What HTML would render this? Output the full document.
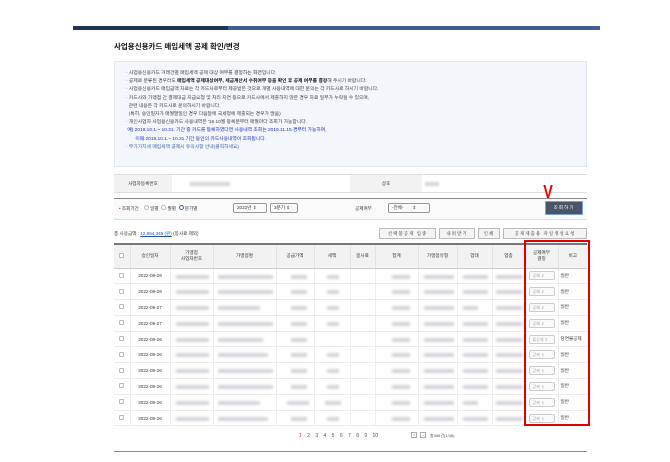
<!DOCTYPE html>
<html><head><meta charset="utf-8"><style>
*{margin:0;padding:0;box-sizing:border-box}
body{width:670px;height:462px;background:#fff;font-family:"Liberation Sans","Noto Sans CJK KR",sans-serif;color:#333;position:relative;overflow:hidden;font-size:5px}
.a{position:absolute}
.bar{left:73px;top:26px;width:527px;height:4px;background:#3f5f93}
.bar2{left:73px;top:26px;width:155px;height:4px;background:#1e3457}
.title{left:114px;top:41px;font-size:7.5px;font-weight:bold;color:#111}
.info{left:114px;top:61px;width:473px;height:106px;background:#f3f6fb;border:1px solid #e3e8f0;padding:8px 0 0 11px;font-size:4.8px;line-height:8.2px;color:#444}
.info b{color:#111}
.blue{color:#2233cc}
.bl{filter:blur(1.3px);background:#d2d4d8;height:4px;position:absolute}
table{border-collapse:collapse;position:absolute;left:114px;top:243px;width:473px;font-size:4.6px}
th{background:#f2f2f2;height:24px;font-weight:normal;border-left:1px solid #e2e2e2;border-top:2px solid #777;border-bottom:1px solid #ccc;color:#333;line-height:6px}
td{height:15.8px;border-left:1px solid #eee;border-bottom:1px solid #ececec;text-align:center;position:relative}
th:first-child,td:first-child{border-left:none}
.cb{display:inline-block;width:5px;height:5px;border:1px solid #bbb;border-radius:1px;background:#fff}
.sel{display:inline-block;width:26px;height:9px;border:1px solid #ccc;border-radius:2px;color:#aaa;font-size:4px;line-height:7px;text-align:left;padding-left:3px;background:#fafafa}
.btn{position:absolute;top:228px;height:11px;border:1px solid #bbb;background:#f4f4f4;font-size:4.5px;line-height:9px;text-align:center;color:#333;font-family:"Liberation Serif","Noto Serif CJK SC",serif;letter-spacing:1px}
</style></head><body>
<div class="a bar"></div><div class="a bar2"></div>
<div class="a title">사업용신용카드 매입세액 공제 확인/변경</div>
<div class="a info">
· 사업용신용카드 거래건별 매입세액 공제 대상 여부를 결정하는 화면입니다.<br>
· 공제로 분류된 경우라도 <b>매입세액 공제대상여부, 세금계산서 수취여부 등을 확인 후 공제 여부를 결정</b>해 주시기 바랍니다.<br>
· 사업용신용카드 매입금액 자료는 각 카드사로부터 제공받은 것으로 개별 사용내역에 대한 문의는 각 카드사로 하시기 바랍니다.<br>
· 카드사와 가맹점 간 결제대금 지급요청 및 처리 지연 등으로 카드사에서 제출하지 않은 경우 자료 일부가 누락될 수 있으며,<br>
&nbsp;&nbsp;관련 내용은 각 카드사로 문의하시기 바랍니다.<br>
&nbsp;&nbsp;(특히, 승인일자가 매월말일인 경우 다음달에 국세청에 제출되는 경우가 많음)<br>
· 개인사업자 사업용신용카드 사용내역은 '19.10월 등록분부터 매월마다 조회가 가능합니다.<br>
<span class="blue">&nbsp;예) 2019.10.1.~ 10.31. 기간 중 카드를 등록하였다면 사용내역 조회는 2019.11.15.경부터 가능하며,<br>
&nbsp;&nbsp;&nbsp;&nbsp;&nbsp;&nbsp;&nbsp;이때 2019.10.1.~ 10.31 기간 동안의 카드사용내역이 조회됩니다.</span><br>
<span style="color:#4466aa">· 부가가치세 매입세액 공제시 유의사항 안내(클릭하세요)</span>
</div>
<div class="a" style="left:114px;top:174px;width:473px;height:19px;border-top:1px solid #ddd;border-bottom:1px solid #ddd"></div>
<div class="a" style="left:114px;top:175px;width:58px;height:17px;background:#f2f2f2;font-size:4.6px;line-height:17px;text-align:center">사업자등록번호</div>
<div class="a" style="left:350px;top:175px;width:72px;height:17px;background:#f2f2f2;font-size:4.6px;line-height:17px;text-align:center">상호</div>
<div class="bl" style="left:190px;top:182px;width:40px"></div>
<div class="bl" style="left:425px;top:182px;width:14px"></div>
<div class="a" style="left:114px;top:198px;width:473px;height:22px;border-top:1px solid #888;border-bottom:1px solid #ddd;background:#fafafa"></div>
<div class="a" style="left:119px;top:205px;font-size:4.6px;line-height:7px"><span style="color:#d22">•</span> 조회기간 &nbsp;&nbsp;&nbsp;<span class="cb" style="border-radius:50%"></span> 일별 &nbsp;<span class="cb" style="border-radius:50%"></span> 월별 &nbsp;<span class="cb" style="border-radius:50%;border:1.5px solid #2a6ad8"></span> 분기별</div>
<div class="a sel" style="left:233px;top:203px;width:34px;height:10px;color:#333;line-height:8px;border-color:#999;font-size:4.6px">2022년 ⇕</div>
<div class="a sel" style="left:270px;top:203px;width:28px;height:10px;color:#333;line-height:8px;border-color:#999;font-size:4.6px">3분기 ⇕</div>
<div class="a" style="left:355px;top:206px;font-size:4.6px">공제여부</div>
<div class="a sel" style="left:388px;top:203px;width:42px;height:10px;color:#333;line-height:8px;border-color:#999;font-size:4.6px">-전체- &nbsp;&nbsp;&nbsp;&nbsp;&nbsp;&nbsp;⇕</div>
<div class="a" style="left:545px;top:201px;width:38px;height:14px;background:#4a5568;border:1px solid #7aa0e0;color:#fff;font-size:4.6px;line-height:12px;text-align:center;letter-spacing:1px">조회하기</div>
<div class="a" style="left:542px;top:182px;color:#e00;font-size:18px;font-weight:bold;font-family:'Liberation Sans';transform:scaleX(0.8)">V</div>
<div class="a" style="left:114px;top:231px;font-size:4.6px">총 사용금액 : <span style="color:#2255aa;text-decoration:underline">12,964,345 (원)</span> (봉사료 제외)</div>
<div class="btn" style="left:379px;width:57px">선택불공제 입종</div>
<div class="btn" style="left:439px;width:36px">내려받기</div>
<div class="btn" style="left:478px;width:22px">인쇄</div>
<div class="btn" style="left:503px;width:84px">공제제출용 파일생성요청</div>
<table>
<tr><th style="width:16px"><span class="cb"></span></th><th style="width:40px">승인일자</th><th style="width:43px">가맹점<br>사업자번호</th><th style="width:63px">가맹점명</th><th style="width:38px">공급가액</th><th style="width:36px">세액</th><th style="width:25px">봉사료</th><th style="width:43px">합계</th><th style="width:39px">가맹점유형</th><th style="width:35px">업태</th><th style="width:33px">업종</th><th style="width:33px">공제여부<br>결정</th><th>비고</th></tr>
<tr><td><span class="cb"></span></td><td>2022-09-29</td><td><div class="bl" style="left:5px;top:6px;width:33px"></div></td><td><div class="bl" style="left:4px;top:6px;width:55px"></div></td><td><div class="bl" style="left:14px;top:6px;width:16px"></div></td><td><div class="bl" style="left:12px;top:6px;width:12px"></div></td><td></td><td><div class="bl" style="left:16px;top:6px;width:18px"></div></td><td><div class="bl" style="left:5px;top:6px;width:30px"></div></td><td><div class="bl" style="left:5px;top:6px;width:25px"></div></td><td><div class="bl" style="left:3px;top:6px;width:27px"></div></td><td><span class="sel">공제 ⇕</span></td><td style="text-align:left;padding-left:2px">일반</td></tr>
<tr><td><span class="cb"></span></td><td>2022-09-29</td><td><div class="bl" style="left:5px;top:6px;width:33px"></div></td><td><div class="bl" style="left:4px;top:6px;width:55px"></div></td><td><div class="bl" style="left:14px;top:6px;width:16px"></div></td><td><div class="bl" style="left:12px;top:6px;width:12px"></div></td><td></td><td><div class="bl" style="left:16px;top:6px;width:18px"></div></td><td><div class="bl" style="left:5px;top:6px;width:30px"></div></td><td><div class="bl" style="left:5px;top:6px;width:25px"></div></td><td><div class="bl" style="left:3px;top:6px;width:27px"></div></td><td><span class="sel">공제 ⇕</span></td><td style="text-align:left;padding-left:2px">일반</td></tr>
<tr><td><span class="cb"></span></td><td>2022-09-27</td><td><div class="bl" style="left:5px;top:6px;width:33px"></div></td><td><div class="bl" style="left:4px;top:6px;width:42px"></div></td><td><div class="bl" style="left:14px;top:6px;width:16px"></div></td><td><div class="bl" style="left:12px;top:6px;width:12px"></div></td><td></td><td><div class="bl" style="left:16px;top:6px;width:18px"></div></td><td><div class="bl" style="left:5px;top:6px;width:30px"></div></td><td><div class="bl" style="left:5px;top:6px;width:15px"></div></td><td><div class="bl" style="left:3px;top:6px;width:27px"></div></td><td><span class="sel">공제 ⇕</span></td><td style="text-align:left;padding-left:2px">일반</td></tr>
<tr><td><span class="cb"></span></td><td>2022-09-27</td><td><div class="bl" style="left:5px;top:6px;width:33px"></div></td><td><div class="bl" style="left:4px;top:6px;width:55px"></div></td><td><div class="bl" style="left:14px;top:6px;width:16px"></div></td><td><div class="bl" style="left:12px;top:6px;width:12px"></div></td><td></td><td><div class="bl" style="left:16px;top:6px;width:18px"></div></td><td><div class="bl" style="left:5px;top:6px;width:30px"></div></td><td><div class="bl" style="left:5px;top:6px;width:25px"></div></td><td><div class="bl" style="left:3px;top:6px;width:27px"></div></td><td><span class="sel">공제 ⇕</span></td><td style="text-align:left;padding-left:2px">일반</td></tr>
<tr><td><span class="cb"></span></td><td>2022-09-26</td><td><div class="bl" style="left:5px;top:6px;width:33px"></div></td><td><div class="bl" style="left:4px;top:6px;width:45px"></div></td><td><div class="bl" style="left:14px;top:6px;width:16px"></div></td><td></td><td></td><td><div class="bl" style="left:16px;top:6px;width:18px"></div></td><td><div class="bl" style="left:5px;top:6px;width:30px"></div></td><td><div class="bl" style="left:5px;top:6px;width:25px"></div></td><td><div class="bl" style="left:3px;top:6px;width:27px"></div></td><td><span class="sel">불공제 ⇕</span></td><td style="text-align:left;padding-left:2px;white-space:nowrap">당연불공제</td></tr>
<tr><td><span class="cb"></span></td><td>2022-09-26</td><td><div class="bl" style="left:5px;top:6px;width:33px"></div></td><td><div class="bl" style="left:4px;top:6px;width:50px"></div></td><td><div class="bl" style="left:14px;top:6px;width:16px"></div></td><td><div class="bl" style="left:12px;top:6px;width:12px"></div></td><td></td><td><div class="bl" style="left:16px;top:6px;width:18px"></div></td><td><div class="bl" style="left:5px;top:6px;width:30px"></div></td><td><div class="bl" style="left:5px;top:6px;width:25px"></div></td><td><div class="bl" style="left:3px;top:6px;width:27px"></div></td><td><span class="sel">공제 ⇕</span></td><td style="text-align:left;padding-left:2px">일반</td></tr>
<tr><td><span class="cb"></span></td><td>2022-09-26</td><td><div class="bl" style="left:5px;top:6px;width:33px"></div></td><td><div class="bl" style="left:4px;top:6px;width:55px"></div></td><td><div class="bl" style="left:14px;top:6px;width:16px"></div></td><td><div class="bl" style="left:12px;top:6px;width:12px"></div></td><td></td><td><div class="bl" style="left:16px;top:6px;width:18px"></div></td><td><div class="bl" style="left:5px;top:6px;width:30px"></div></td><td><div class="bl" style="left:5px;top:6px;width:25px"></div></td><td><div class="bl" style="left:3px;top:6px;width:27px"></div></td><td><span class="sel">공제 ⇕</span></td><td style="text-align:left;padding-left:2px">일반</td></tr>
<tr><td><span class="cb"></span></td><td>2022-09-26</td><td><div class="bl" style="left:5px;top:6px;width:33px"></div></td><td><div class="bl" style="left:4px;top:6px;width:55px"></div></td><td><div class="bl" style="left:14px;top:6px;width:16px"></div></td><td><div class="bl" style="left:12px;top:6px;width:12px"></div></td><td></td><td><div class="bl" style="left:16px;top:6px;width:18px"></div></td><td><div class="bl" style="left:5px;top:6px;width:30px"></div></td><td><div class="bl" style="left:5px;top:6px;width:25px"></div></td><td><div class="bl" style="left:3px;top:6px;width:27px"></div></td><td><span class="sel">공제 ⇕</span></td><td style="text-align:left;padding-left:2px">일반</td></tr>
<tr><td><span class="cb"></span></td><td>2022-09-26</td><td><div class="bl" style="left:5px;top:6px;width:33px"></div></td><td><div class="bl" style="left:4px;top:6px;width:42px"></div></td><td><div class="bl" style="left:10px;top:6px;width:22px"></div></td><td><div class="bl" style="left:10px;top:6px;width:16px"></div></td><td></td><td><div class="bl" style="left:16px;top:6px;width:18px"></div></td><td><div class="bl" style="left:5px;top:6px;width:30px"></div></td><td><div class="bl" style="left:5px;top:6px;width:15px"></div></td><td><div class="bl" style="left:3px;top:6px;width:27px"></div></td><td><span class="sel">공제 ⇕</span></td><td style="text-align:left;padding-left:2px">일반</td></tr>
<tr><td><span class="cb"></span></td><td>2022-09-26</td><td><div class="bl" style="left:5px;top:6px;width:33px"></div></td><td><div class="bl" style="left:4px;top:6px;width:50px"></div></td><td><div class="bl" style="left:14px;top:6px;width:16px"></div></td><td><div class="bl" style="left:12px;top:6px;width:12px"></div></td><td></td><td><div class="bl" style="left:16px;top:6px;width:18px"></div></td><td><div class="bl" style="left:5px;top:6px;width:30px"></div></td><td><div class="bl" style="left:5px;top:6px;width:25px"></div></td><td><div class="bl" style="left:3px;top:6px;width:27px"></div></td><td><span class="sel">공제 ⇕</span></td><td style="text-align:left;padding-left:2px">일반</td></tr>
</table>
<div class="a" style="left:524px;top:240px;width:66px;height:186px;border:2px solid #e00000"></div>
<div class="a" style="left:299px;top:433px;font-size:5px;color:#555;word-spacing:4px"><span style="color:#d22">1</span> 2 3 4 5 6 7 8 9 10</div>
<div class="a" style="left:411px;top:432px;width:6px;height:6px;border:1px solid #aaa;font-size:4px;line-height:4px;text-align:center">›</div>
<div class="a" style="left:420px;top:432px;width:6px;height:6px;border:1px solid #aaa;font-size:4px;line-height:4px;text-align:center">→</div>
<div class="a" style="left:430px;top:433px;font-size:4px;color:#555">총458건(1/46)</div>
<div class="a" style="left:114px;top:451px;width:473px;height:1px;background:#888"></div>
</body></html>
